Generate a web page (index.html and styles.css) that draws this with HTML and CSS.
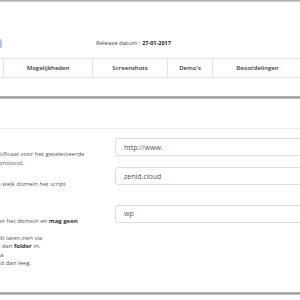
FILE: index.html
```html
<!DOCTYPE html>
<html lang="nl">
<head>
  <meta charset="UTF-8" />
  <title>WordPress installeren</title>
  <link rel="stylesheet" href="styles.css">
</head>
<body>
  <div class="rule rule-top"></div>

  <header class="app-head">
    <a class="btn-install">Installeren</a>
    <div class="release">Release datum : <b>27-01-2017</b></div>
  </header>

  <nav class="tabs">
    <span class="tab">Overzicht</span>
    <span class="tab">Mogelijkheden</span>
    <span class="tab">Screenshots</span>
    <span class="tab">Demo's</span>
    <span class="tab">Beoordelingen</span>
  </nav>

  <div class="rule"></div>

  <section class="setup">
    <div class="setup-head"></div>

    <div class="field">
      <div class="field-label">
        <strong>Kies protocol</strong>
        Als u een geldig SSL certificaat voor het geselecteerde<br>
        domein heeft, kies het protocol.
      </div>
      <input class="field-input" type="text" value="http://www." readonly>
    </div>

    <div class="field">
      <div class="field-label">
        <strong>Kies domein</strong>
        Selecteer daaronder op welk domein het script<br>
        geïnstalleerd moet<br>
        worden.
      </div>
      <input class="field-input" type="text" value="zenid.cloud" readonly>
    </div>

    <div class="field">
      <div class="field-label">
        <strong>In map</strong>
        De map is nu relatief aan het domein en <b>mag geen</b><br>
        bestaande map zijn.<br>
        Bijv. als u WordPress wilt laten zien via<br>
        uwdomein.nl/folder vul dan <b>folder</b> in.<br>
        Om het te installeren via<br>
        domein.nl laat u het veld dan leeg.
      </div>
      <input class="field-input" type="text" value="wp" readonly>
    </div>
  </section>

  <div class="rule"></div>
</body>
</html>
```

FILE: styles.css
```css
body {
  margin: 0;
  width: 300px;
  height: 300px;
  overflow: hidden;
  background: #fff;
  color: #555;
  font-family: "Open Sans", "Liberation Sans", sans-serif;
}
.rule {
  height: 3px;
  background: linear-gradient(#bcbcbc 0%, #9c9c9c 50%, #d2d2d2 100%);
}
.rule-top {
  height: 2px;
  background: linear-gradient(#a8a8a8, #cfcfcf);
}
.app-head {
  display: flex;
  align-items: center;
  height: 56px;
  padding-top: 26px;
  box-sizing: border-box;
}
.btn-install {
  flex: none;
  width: 60px;
  height: 9px;
  margin-left: -58px;
  background: #b3c4e5;
  border-radius: 2px;
  color: #fff;
  font-size: 5px;
  line-height: 9px;
  text-align: center;
}
.release {
  margin-left: 94px;
  font-size: 6px;
  color: #444;
  white-space: nowrap;
}
.release b {
  font-size: 5.5px;
  color: #222;
}
.tabs {
  display: grid;
  grid-template-columns: 53px 89px 75px 45px 90px;
  margin-left: -49px;
  height: 20px;
  box-sizing: border-box;
  border-top: 1px solid #e2e2e2;
  border-bottom: 1px solid #e2e2e2;
  margin-bottom: 18px;
}
.tab {
  border-right: 1px solid #e2e2e2;
  font-size: 6px;
  font-weight: 600;
  color: #333;
  text-align: center;
  line-height: 18px;
  white-space: nowrap;
}
.setup {
  padding-bottom: 24px;
}
.setup-head {
  height: 29px;
  border-bottom: 1px solid #eeeeee;
  margin-bottom: 9px;
}
.field {
  display: grid;
  grid-template-columns: 165px 1fr;
  column-gap: 15px;
  align-items: start;
  width: 420px;
  margin-left: -65px;
}
.field-label {
  padding-top: 4px;
  font-size: 6px;
  line-height: 8.4px;
  white-space: nowrap;
}
.field-label strong {
  display: block;
  color: #333;
}
.field-label b {
  color: #333;
}
.field-input {
  width: 100%;
  height: 18px;
  box-sizing: border-box;
  margin: 0;
  padding: 0 8px;
  border: 1px solid #dcdcdc;
  border-radius: 3px;
  background: #fff;
  font: 7px "Open Sans", "Liberation Sans", sans-serif;
  color: #555;
  outline: none;
}
```
